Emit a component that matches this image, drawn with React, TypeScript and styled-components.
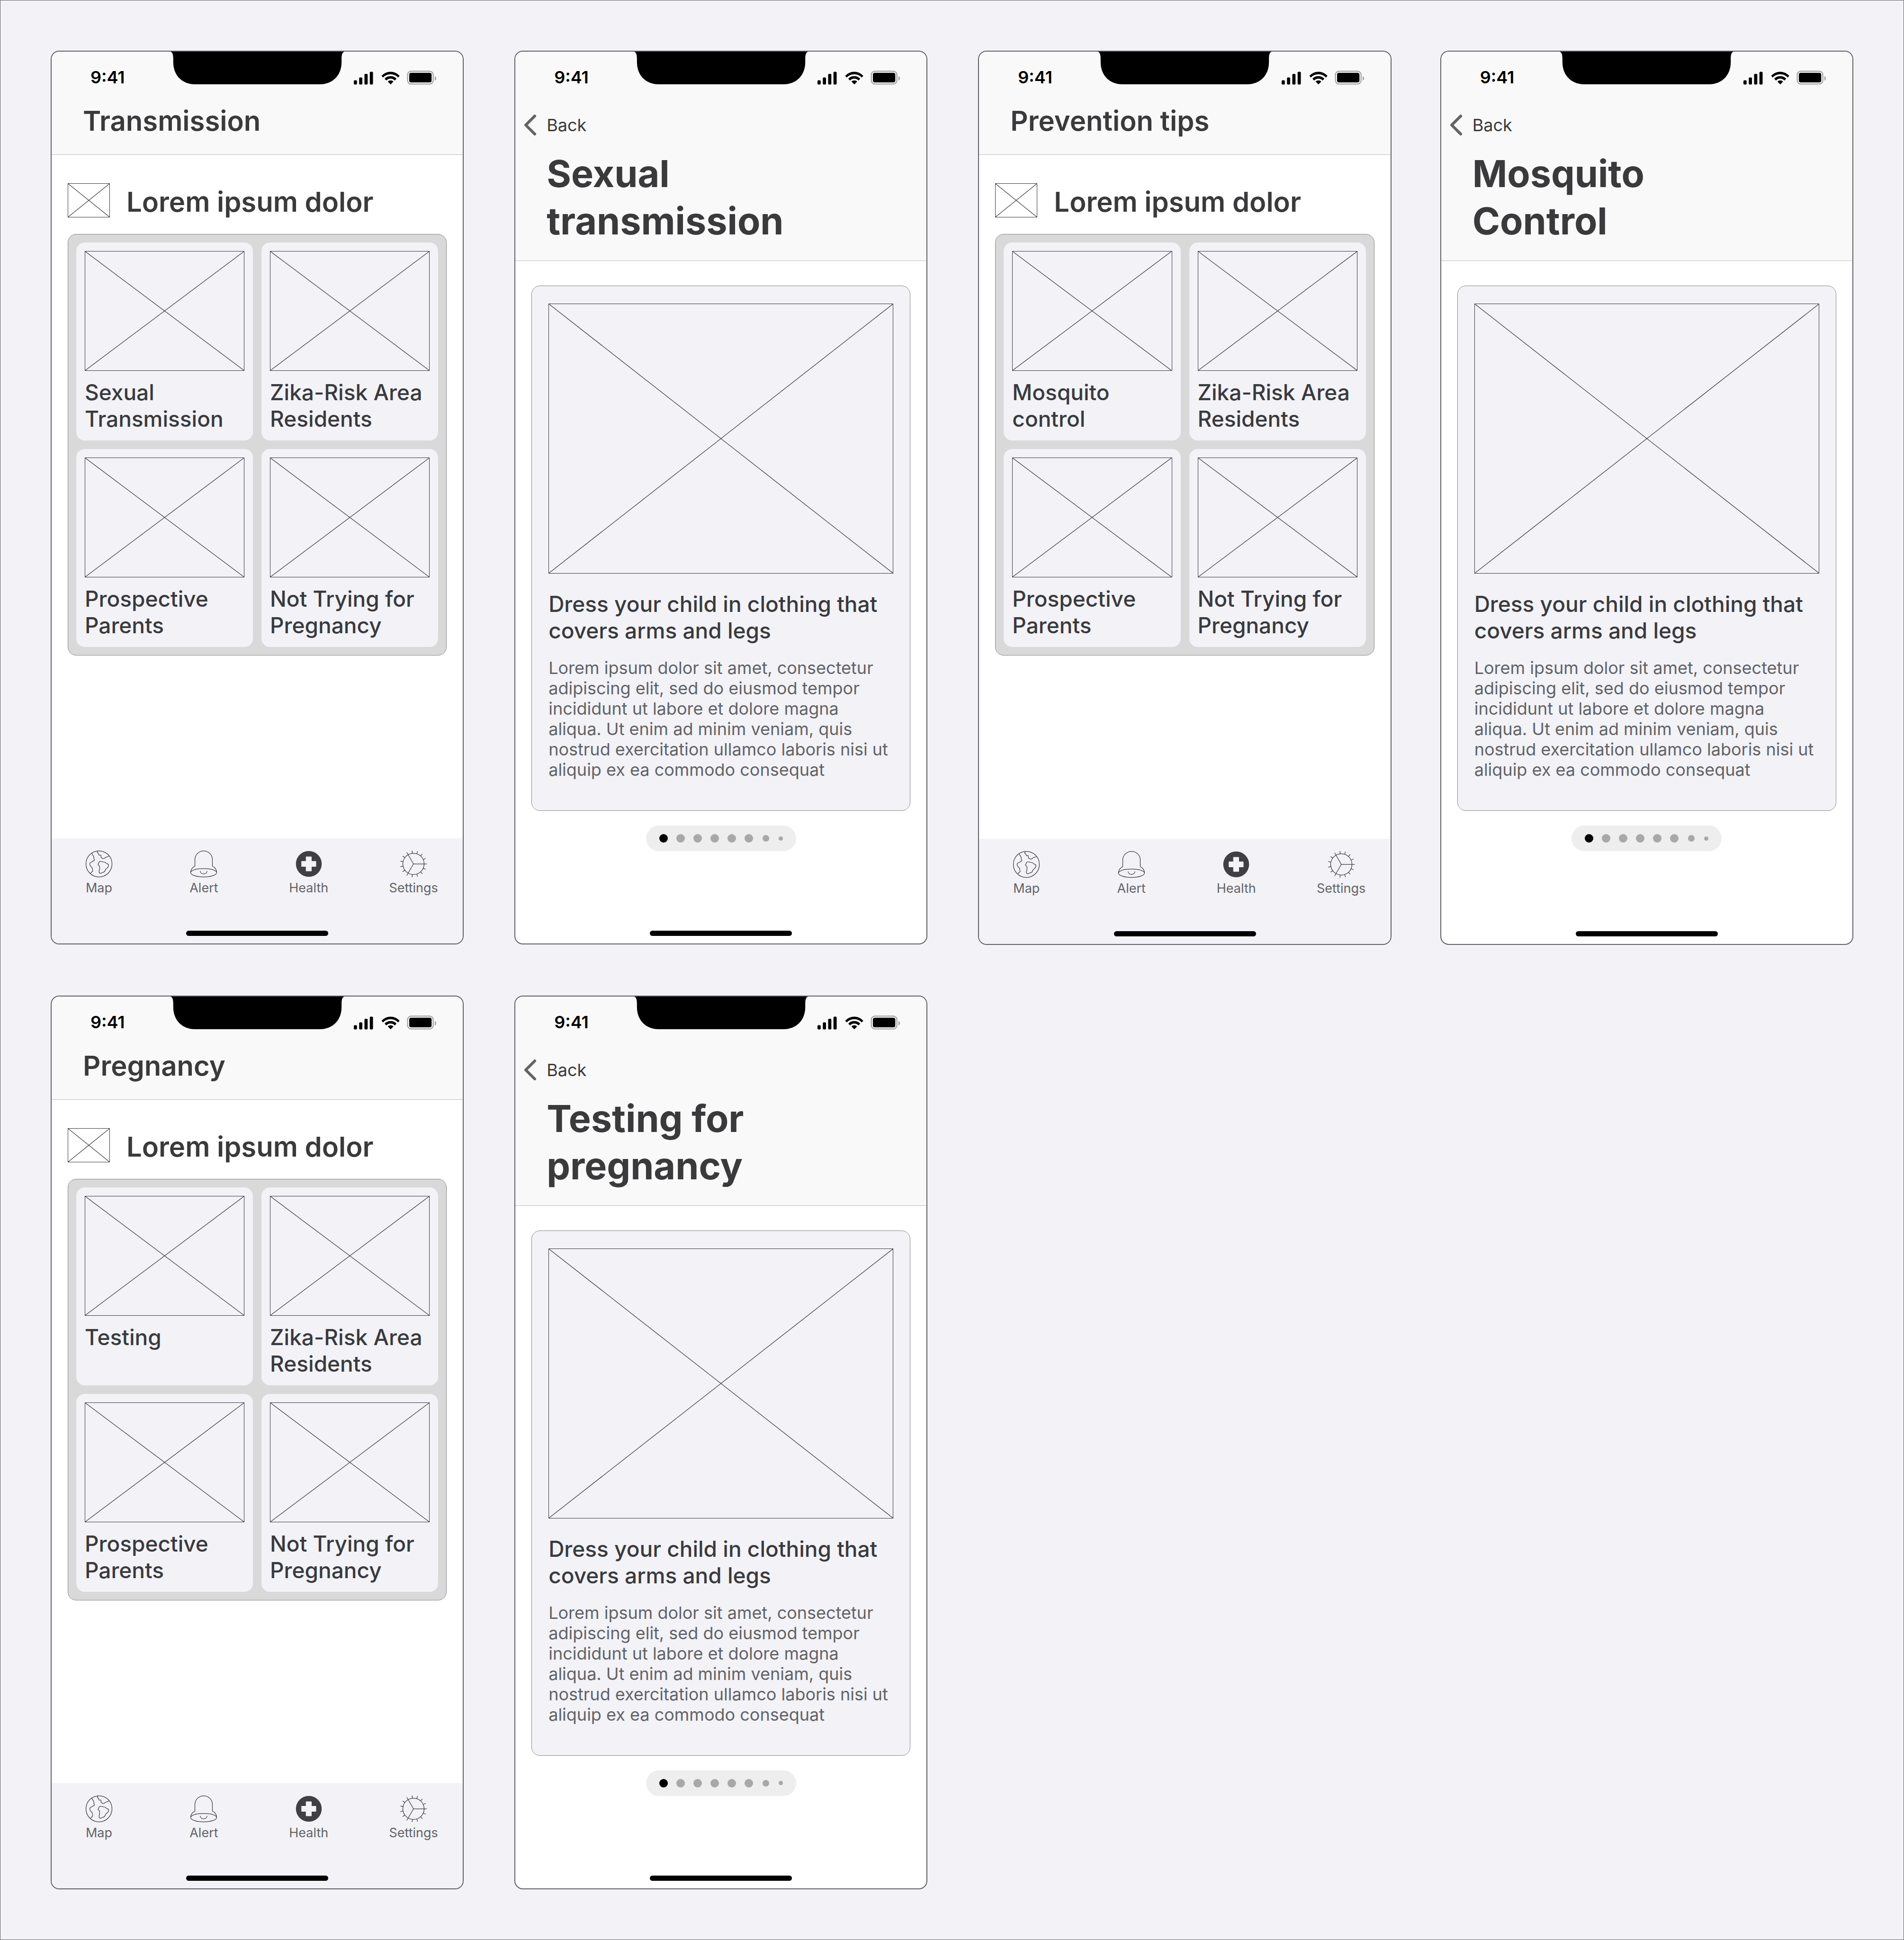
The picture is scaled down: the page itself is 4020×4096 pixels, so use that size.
import React from 'react';
import styled, { createGlobalStyle, css } from 'styled-components';

const color = {
  canvas: '#f2f2f7',
  surface: '#ffffff',
  bar: '#f9f9f9',
  hairline: '#bcbcbc',
  frame: '#636366',
  outline: '#88888b',
  panel: '#d9d9d9',
  ink: '#3a3a3c',
  inkSoft: '#636366',
  pager: '#eeeeee',
  dot: '#a8a8a8',
};

const GlobalStyle = createGlobalStyle`
  *, *::before, *::after { box-sizing: border-box; }
  body {
    margin: 0;
    background: ${color.canvas};
    color: ${color.ink};
    font-family: Inter, "Liberation Sans", sans-serif;
  }
  h1, h2, h3, p { margin: 0; }
  a { color: inherit; text-decoration: none; }
  svg { display: block; }
`;

/* ---------- board ---------- */

const Board = styled.main`
  display: grid;
  grid-template-columns: 1002fr 1000fr;
  align-content: start;
  gap: 107px;
  min-height: 100vh;
  padding: 106px 106px 100px;
  border: 1px solid ${color.frame};
`;

const Flow = styled.section<{ $gap: number }>`
  display: grid;
  grid-template-columns: 1fr 1fr;
  gap: ${(p) => p.$gap}px;
`;

const Phone = styled.article`
  display: flex;
  flex-direction: column;
  aspect-ratio: 390 / 844;
  overflow: hidden;
  background: ${color.surface};
  border: 2px solid ${color.frame};
  border-radius: 18px;
`;

/* ---------- status bar ---------- */

const StatusBar = styled.div`
  display: grid;
  grid-template-columns: 1fr auto 1fr;
  align-items: start;
  height: 107px;
  color: #000;
`;

const Clock = styled.time`
  padding: 33px 0 0 82px;
  font-size: 36px;
  line-height: 42px;
  font-weight: 600;
`;

const Indicators = styled.div`
  display: flex;
  justify-content: flex-end;
  padding: 40px 56px 0 0;
`;

function Status() {
  return (
    <StatusBar>
      <Clock>9:41</Clock>
      <svg width="369" height="69" viewBox="0 0 495 93" aria-hidden="true">
        <path d="M0 0C6 2 8 8 8 22V30C8 68 34 93 70 93H425C461 93 487 68 487 30V22C487 8 489 2 495 0Z" />
      </svg>
      <Indicators>
        <svg width="174" height="30" viewBox="66 212 696 120" aria-hidden="true">
          <rect x="66" y="294" width="27" height="36" rx="8" />
          <rect x="111" y="270" width="27" height="60" rx="8" />
          <rect x="156" y="240" width="27" height="90" rx="8" />
          <rect x="201" y="222" width="27" height="108" rx="8" />
          <path d="M300 256A103 103 0 0 1 453 256L440 271A86 86 0 0 0 313 271Z" />
          <path d="M326 281A68 68 0 0 1 427 281L412 296A48 48 0 0 0 341 296Z" />
          <path d="M353 305A35 35 0 0 1 401 305L377 329Z" />
          <rect x="520.5" y="217.5" width="216" height="108" rx="30" fill="none" stroke="#a2a2a2" strokeWidth="9" />
          <rect x="534" y="231" width="189" height="81" rx="16" />
          <path d="M750 259C766 266 766 290 750 297Z" fill="#a2a2a2" />
        </svg>
      </Indicators>
    </StatusBar>
  );
}

/* ---------- headers ---------- */

const Header = styled.header<{ $bottom: number }>`
  padding-bottom: ${(p) => p.$bottom}px;
  background: ${color.bar};
  border-bottom: 1px solid ${color.hairline};
`;

const titleText = css`
  font-size: 58px;
  line-height: 78px;
  font-weight: 600;
`;

const ListTitle = styled.h1`
  ${titleText}
  padding-left: 66px;
`;

const BackLink = styled.a`
  display: flex;
  align-items: center;
  gap: 22px;
  width: max-content;
  margin: 26px 0 30px 18px;
  font-size: 36px;
  line-height: 44px;
`;

const DetailTitle = styled.h1`
  padding: 0 200px 0 66px;
  font-size: 79px;
  line-height: 100px;
  font-weight: 700;
`;

/* ---------- placeholder picture ---------- */

const Frame = styled.div<{ $w?: number; $h: number }>`
  flex: none;
  width: ${(p) => (p.$w ? `${p.$w}px` : '100%')};
  height: ${(p) => p.$h}px;
  border: 1px solid ${color.ink};

  svg {
    width: 100%;
    height: 100%;
  }

  line {
    stroke: ${color.ink};
    stroke-width: 1.25px;
    vector-effect: non-scaling-stroke;
  }
`;

function Placeholder({ w, h }: { w?: number; h: number }) {
  return (
    <Frame $w={w} $h={h}>
      <svg viewBox="0 0 100 100" preserveAspectRatio="none" aria-hidden="true">
        <line x1="0" y1="0" x2="100" y2="100" />
        <line x1="100" y1="0" x2="0" y2="100" />
      </svg>
    </Frame>
  );
}

/* ---------- list screen ---------- */

const SectionHead = styled.div`
  display: flex;
  align-items: flex-start;
  gap: 35px;
  padding: 60px 34px 0;
`;

const SectionTitle = styled.h2`
  ${titleText}
`;

const Panel = styled.div`
  display: grid;
  grid-template-columns: 1fr 1fr;
  gap: 18px;
  margin: 29px 34px 0;
  padding: 17px;
  background: ${color.panel};
  border: 1px solid ${color.outline};
  border-radius: 18px;
`;

const headingText = css`
  font-size: 46px;
  line-height: 56px;
  font-weight: 500;
`;

const Card = styled.a`
  ${headingText}
  display: flex;
  flex-direction: column;
  gap: 17px;
  padding: 18px;
  background: ${color.canvas};
  border-radius: 18px;
`;

/* ---------- tab bar ---------- */

const TabBar = styled.footer`
  display: flex;
  flex-direction: column;
  min-height: 222px;
  margin-top: auto;
  background: ${color.canvas};
`;

const Tabs = styled.nav`
  display: flex;
  justify-content: space-between;
  padding: 24px 18px 0 14px;
`;

const Tab = styled.a`
  display: flex;
  flex-direction: column;
  align-items: center;
  gap: 5px;
  width: 172px;
  font-size: 27px;
  line-height: 32px;
  color: ${color.inkSoft};

  svg {
    width: 60px;
    height: 60px;
    fill: none;
    stroke: ${color.ink};
    stroke-width: 5px;
    stroke-linecap: round;
    stroke-linejoin: round;
  }
`;

const HomeIndicator = styled.div`
  align-self: center;
  width: 300px;
  height: 11px;
  margin: auto 0 16px;
  background: #000;
  border-radius: 6px;
`;

function GlobeIcon() {
  return (
    <svg viewBox="-120 -120 240 240" aria-hidden="true">
      <circle r="110" />
      <g transform="translate(-238 -235)">
        <path d="M177 146C182 157 190 164 194 174C196 178 195 182 195 186C195 192 198 198 200 203C200 207 194 207 190 210C186 212 186 215 182 216C174 220 166 223 161 229C158 240 164 251 171 259C173 262 178 262 180 266C180 278 184 286 186 294C185 301 177 302 174 305C171 309 169 315 166 316" />
        <path d="M229 127L223 138C224 144 232 143 235 148C238 152 234 157 238 161C243 164 250 158 254 161C256 167 254 173 256 181C261 186 270 191 275 190C284 190 290 182 297 178C305 175 315 174 323 169" />
        <path d="M245 214C250 213 257 213 263 215C271 220 283 218 291 222C296 225 298 230 304 232C310 235 318 238 319 242C319 249 316 256 314 263C308 270 298 274 293 284C288 290 290 294 285 300C279 307 268 306 262 310C256 314 249 316 244 314C238 309 238 301 239 294C241 286 244 281 244 272C243 264 244 258 242 252C237 248 230 245 230 240C231 236 235 233 236 229C236 222 240 217 245 214Z" />
      </g>
    </svg>
  );
}

function BellIcon() {
  return (
    <svg viewBox="1009 115 240 240" aria-hidden="true">
      <path d="M1055 255V199A74 74 0 0 1 1203 199V255C1224 263 1239 284 1239 308C1239 330 1188 345 1129 345C1070 345 1019 330 1019 308C1019 284 1034 263 1055 255Z" />
      <path d="M1020 303C1035 284 1080 274 1129 274C1178 274 1223 284 1238 303" />
      <path d="M1100 297C1106 327 1152 327 1158 297" />
    </svg>
  );
}

function HealthIcon() {
  return (
    <svg viewBox="-120 -120 240 240" aria-hidden="true">
      <circle r="109" fill="#404042" stroke="none" />
      <path
        d="M-21 -62H20Q24 -62 24 -58V-24H58Q62 -24 62 -20V20Q62 24 58 24H24V58Q24 62 20 62H-21Q-25 62 -25 58V24H-59Q-63 24 -63 20V-20Q-63 -24 -59 -24H-25V-58Q-25 -62 -21 -62Z"
        fill={color.canvas}
        stroke="none"
      />
    </svg>
  );
}

function GearIcon() {
  const teeth = Array.from({ length: 15 }, (_, i) => i * 24);
  return (
    <svg viewBox="-120 -120 240 240" aria-hidden="true">
      <circle r="90" />
      {teeth.map((angle) => (
        <line key={angle} x1={angle % 120 === 0 ? 0 : 91} x2="111" transform={`rotate(${angle})`} />
      ))}
    </svg>
  );
}

const tabs = [
  { label: 'Map', Icon: GlobeIcon },
  { label: 'Alert', Icon: BellIcon },
  { label: 'Health', Icon: HealthIcon },
  { label: 'Settings', Icon: GearIcon },
];

function ListScreen({ title, topics }: { title: string; topics: string[] }) {
  return (
    <Phone>
      <Header $bottom={32}>
        <Status />
        <ListTitle>{title}</ListTitle>
      </Header>
      <SectionHead>
        <Placeholder w={89} h={72} />
        <SectionTitle>Lorem ipsum dolor</SectionTitle>
      </SectionHead>
      <Panel>
        {topics.map((topic) => (
          <Card href="#" key={topic}>
            <Placeholder h={253} />
            {topic}
          </Card>
        ))}
      </Panel>
      <TabBar>
        <Tabs>
          {tabs.map(({ label, Icon }) => (
            <Tab href="#" key={label}>
              <Icon />
              {label}
            </Tab>
          ))}
        </Tabs>
        <HomeIndicator />
      </TabBar>
    </Phone>
  );
}

/* ---------- detail screen ---------- */

const Tip = styled.section`
  margin: 52px 34px 0;
  padding: 37px 35px 64px;
  background: ${color.canvas};
  border: 1px solid ${color.outline};
  border-radius: 18px;
`;

const TipHeading = styled.h2`
  ${headingText}
  margin-top: 36px;
`;

const TipBody = styled.p`
  margin-top: 30px;
  font-size: 36px;
  line-height: 43px;
  color: ${color.inkSoft};
`;

const Pager = styled.div`
  display: flex;
  align-items: center;
  align-self: center;
  gap: 18px;
  height: 54px;
  margin-top: 31px;
  padding: 0 28px;
  background: ${color.pager};
  border-radius: 27px;
`;

const Dot = styled.button<{ $size: number; $slot: number; $active: boolean }>`
  width: ${(p) => p.$size}px;
  height: ${(p) => p.$size}px;
  margin: 0 ${(p) => (p.$slot - p.$size) / 2}px;
  padding: 0;
  border: 0;
  border-radius: 50%;
  background: ${(p) => (p.$active ? '#000' : color.dot)};
`;

const dots = [
  { size: 18, slot: 18 },
  { size: 18, slot: 18 },
  { size: 18, slot: 18 },
  { size: 18, slot: 18 },
  { size: 18, slot: 18 },
  { size: 18, slot: 18 },
  { size: 14, slot: 18 },
  { size: 9, slot: 9 },
];

function DetailScreen({ title }: { title: string }) {
  return (
    <Phone>
      <Header $bottom={34}>
        <Status />
        <BackLink href="#">
          <svg width="26" height="44" viewBox="0 0 26 44" fill="none" stroke={color.frame} strokeWidth="6" strokeLinecap="round" strokeLinejoin="round" aria-hidden="true">
            <path d="M23 3L4 22L23 41" />
          </svg>
          Back
        </BackLink>
        <DetailTitle>{title}</DetailTitle>
      </Header>
      <Tip>
        <Placeholder h={570} />
        <TipHeading>Dress your child in clothing that covers arms and legs</TipHeading>
        <TipBody>
          Lorem ipsum dolor sit amet, consectetur adipiscing elit, sed do eiusmod tempor incididunt ut
          labore et dolore magna aliqua. Ut enim ad minim veniam, quis nostrud exercitation ullamco
          laboris nisi ut aliquip ex ea commodo consequat
        </TipBody>
      </Tip>
      <Pager>
        {dots.map((dot, i) => (
          <Dot key={i} type="button" aria-label={`Tip ${i + 1}`} $size={dot.size} $slot={dot.slot} $active={i === 0} />
        ))}
      </Pager>
      <HomeIndicator />
    </Phone>
  );
}

/* ---------- page ---------- */

const sharedTopics = ['Zika-Risk Area Residents', 'Prospective Parents', 'Not Trying for Pregnancy'];

const flows = [
  { list: 'Transmission', topic: 'Sexual Transmission', detail: 'Sexual transmission', gap: 107 },
  { list: 'Prevention tips', topic: 'Mosquito control', detail: 'Mosquito Control', gap: 103 },
  { list: 'Pregnancy', topic: 'Testing', detail: 'Testing for pregnancy', gap: 107 },
];

export default function App() {
  return (
    <>
      <GlobalStyle />
      <Board>
        {flows.map((flow) => (
          <Flow key={flow.list} $gap={flow.gap}>
            <ListScreen title={flow.list} topics={[flow.topic, ...sharedTopics]} />
            <DetailScreen title={flow.detail} />
          </Flow>
        ))}
      </Board>
    </>
  );
}
